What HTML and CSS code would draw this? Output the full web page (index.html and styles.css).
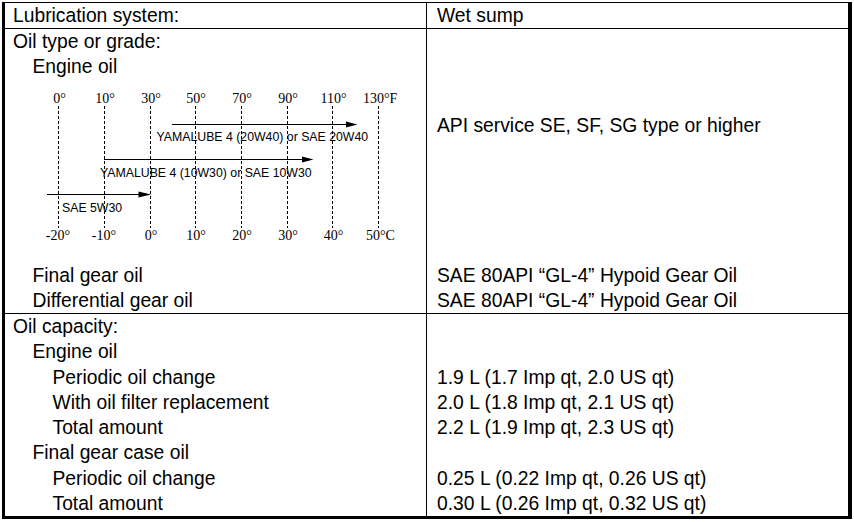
FILE: index.html
```html
<!DOCTYPE html>
<html lang="en">
<head>
<meta charset="utf-8">
<title>Lubrication specifications</title>
<link rel="stylesheet" href="styles.css">
</head>
<body>
<div class="spec">
  <div class="section first">
    <div class="cell left"><div class="line">Lubrication system:</div></div>
    <div class="cell right"><div class="line">Wet sump</div></div>
  </div>

  <div class="section">
    <div class="cell left"><div class="line">Oil type or grade:</div></div>
    <div class="cell right"></div>

    <div class="cell left">
      <div class="line i1">Engine oil</div>
      <svg class="chart" width="421" height="183" viewBox="5 80 421 183" xmlns="http://www.w3.org/2000/svg">
        <g class="grid" stroke="#000" stroke-width="1" stroke-dasharray="3 2">
          <line x1="58.5" y1="106" x2="58.5" y2="228"/>
          <line x1="104.5" y1="106" x2="104.5" y2="228"/>
          <line x1="150.5" y1="106" x2="150.5" y2="228"/>
          <line x1="195.5" y1="106" x2="195.5" y2="228"/>
          <line x1="241.5" y1="106" x2="241.5" y2="228"/>
          <line x1="287.5" y1="106" x2="287.5" y2="228"/>
          <line x1="332.5" y1="106" x2="332.5" y2="228"/>
          <line x1="378.5" y1="106" x2="378.5" y2="228"/>
        </g>
        <g class="deg" font-family="Liberation Serif, Times New Roman, serif" font-size="14" fill="#000" text-anchor="middle">
          <text x="59.5" y="103">0°</text>
          <text x="105" y="103">10°</text>
          <text x="151" y="103">30°</text>
          <text x="196" y="103">50°</text>
          <text x="242" y="103">70°</text>
          <text x="288" y="103">90°</text>
          <text x="333.5" y="103">110°</text>
          <text x="363" y="103" text-anchor="start">130°F</text>
          <text x="58" y="239.5">-20°</text>
          <text x="104" y="239.5">-10°</text>
          <text x="151" y="239.5">0°</text>
          <text x="196" y="239.5">10°</text>
          <text x="242" y="239.5">20°</text>
          <text x="288" y="239.5">30°</text>
          <text x="333.5" y="239.5">40°</text>
          <text x="366" y="239.5" text-anchor="start">50°C</text>
        </g>
        <g class="arrows" stroke="#000" stroke-width="1.2">
          <line x1="172" y1="124.5" x2="348" y2="124.5"/>
          <line x1="104" y1="159.5" x2="303" y2="159.5"/>
          <line x1="47" y1="194.5" x2="140" y2="194.5"/>
        </g>
        <g fill="#000">
          <polygon points="346,121.5 357.5,124.5 346,127.5"/>
          <polygon points="302,156.5 313.5,159.5 302,162.5"/>
          <polygon points="138.5,191.5 151,194.5 138.5,197.5"/>
        </g>
        <g class="oil" font-family="Liberation Sans, Arial, sans-serif" font-size="12.3" fill="#000">
          <text x="156.5" y="141">YAMALUBE 4 (20W40) or SAE 20W40</text>
          <text x="100" y="176.5">YAMALUBE 4 (10W30) or SAE 10W30</text>
          <text x="62" y="211.5">SAE 5W30</text>
        </g>
      </svg>
    </div>
    <div class="cell right"><div class="line api">API service SE, SF, SG type or higher</div></div>

    <div class="cell left"><div class="line i1">Final gear oil</div></div>
    <div class="cell right"><div class="line">SAE 80API “GL-4” Hypoid Gear Oil</div></div>

    <div class="cell left"><div class="line i1">Differential gear oil</div></div>
    <div class="cell right"><div class="line">SAE 80API “GL-4” Hypoid Gear Oil</div></div>
  </div>

  <div class="section">
    <div class="cell left"><div class="line">Oil capacity:</div></div>
    <div class="cell right"></div>
    <div class="cell left"><div class="line i1">Engine oil</div></div>
    <div class="cell right"></div>
    <div class="cell left"><div class="line i2">Periodic oil change</div></div>
    <div class="cell right"><div class="line">1.9 L (1.7 Imp qt, 2.0 US qt)</div></div>
    <div class="cell left"><div class="line i2">With oil filter replacement</div></div>
    <div class="cell right"><div class="line">2.0 L (1.8 Imp qt, 2.1 US qt)</div></div>
    <div class="cell left"><div class="line i2">Total amount</div></div>
    <div class="cell right"><div class="line">2.2 L (1.9 Imp qt, 2.3 US qt)</div></div>
    <div class="cell left"><div class="line i1">Final gear case oil</div></div>
    <div class="cell right"></div>
    <div class="cell left"><div class="line i2">Periodic oil change</div></div>
    <div class="cell right"><div class="line">0.25 L (0.22 Imp qt, 0.26 US qt)</div></div>
    <div class="cell left"><div class="line i2">Total amount</div></div>
    <div class="cell right"><div class="line">0.30 L (0.26 Imp qt, 0.32 US qt)</div></div>
  </div>
</div>
</body>
</html>
```

FILE: styles.css
```css
html, body {
  margin: 0;
  padding: 0;
  background: #fff;
}

body {
  font-family: "Liberation Sans", Arial, sans-serif;
  font-size: 19.3px;
  line-height: 25.25px;
  color: #000;
}

.spec {
  box-sizing: border-box;
  width: 850px;
  margin: 2px 0 0 2px;
  border-top: 1px solid #000;
  border-left: 3px solid #000;
  border-right: 4px solid #000;
  border-bottom: 3px solid #000;
}

.section {
  display: grid;
  grid-template-columns: 421px 1fr;
  border-top: 1px solid #000;
}

.section.first {
  border-top: none;
  height: 25px;
}

.section.first .line {
  line-height: 25px;
}

.cell.left {
  padding-left: 8px;
}

.cell.right {
  border-left: 1px solid #000;
  padding-left: 10px;
}

.line {
  height: 25.25px;
  white-space: nowrap;
}

.i1 {
  padding-left: 19.5px;
}

.i2 {
  padding-left: 39.5px;
}

.chart {
  display: block;
  margin-left: -8px;
}

.line.api {
  margin-top: 59px;
}
```
